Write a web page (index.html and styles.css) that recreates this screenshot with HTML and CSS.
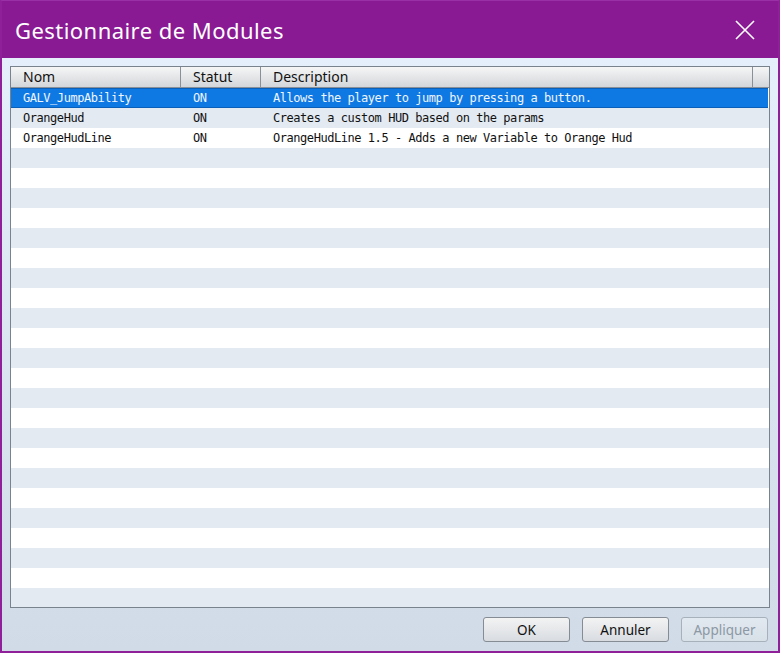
FILE: index.html
```html
<!DOCTYPE html>
<html>
<head>
<meta charset="utf-8">
<link rel="stylesheet" href="styles.css">
</head>
<body>
<div class="window">
  <div class="titlebar">
    <span class="title">Gestionnaire de Modules</span>
    <svg class="close" width="20" height="20" viewBox="0 0 20 20"><path d="M1 1L19 19M19 1L1 19" stroke="#fff" stroke-width="1.6" fill="none"/></svg>
  </div>
  <div class="content">
    <div class="table">
      <div class="header">
        <div class="hc c1">Nom</div>
        <div class="hc c2">Statut</div>
        <div class="hc c3">Description</div>
        <div class="hc c4"></div>
      </div>
      <div class="rows">
        <div class="row sel"><span class="c1">GALV_JumpAbility</span><span class="c2">ON</span><span class="c3">Allows the player to jump by pressing a button.</span></div>
        <div class="row"><span class="c1">OrangeHud</span><span class="c2">ON</span><span class="c3">Creates a custom HUD based on the params</span></div>
        <div class="row"><span class="c1">OrangeHudLine</span><span class="c2">ON</span><span class="c3">OrangeHudLine 1.5 - Adds a new Variable to Orange Hud</span></div>
        <div class="row"></div><div class="row"></div><div class="row"></div><div class="row"></div>
        <div class="row"></div><div class="row"></div><div class="row"></div><div class="row"></div>
        <div class="row"></div><div class="row"></div><div class="row"></div><div class="row"></div>
        <div class="row"></div><div class="row"></div><div class="row"></div><div class="row"></div>
        <div class="row"></div><div class="row"></div><div class="row"></div><div class="row"></div>
        <div class="row"></div><div class="row"></div><div class="row"></div>
      </div>
    </div>
    <div class="buttons">
      <button class="btn">OK</button>
      <button class="btn">Annuler</button>
      <button class="btn disabled">Appliquer</button>
    </div>
  </div>
</div>
</body>
</html>
```

FILE: styles.css
```css
* { box-sizing: border-box; }
html, body { margin: 0; padding: 0; }
body { width: 780px; height: 653px; overflow: hidden; }
.window {
  width: 780px; height: 653px;
  border: 2px solid #8f209a;
  border-top: 1px solid #9a30a5;
  display: flex; flex-direction: column;
  background: #8a1a93;
}
.titlebar {
  height: 57px; flex: none;
  background: #8a1a93;
  display: flex; align-items: center; justify-content: space-between;
  padding: 0 23px 0 13px;
}
.title {
  font-family: "Noto Sans", sans-serif; font-size: 22px; color: #fff;
  letter-spacing: 0.45px;
  padding-top: 1px;
}
.close { display: block; margin-top: 1px; }
.content {
  flex: 1;
  background: linear-gradient(#e4effb, #d0dbe7);
  padding: 8px 8px 0 8px;
  display: flex; flex-direction: column;
}
.table {
  height: 542px; flex: none;
  border: 1px solid #79838e;
  background: #fff;
  display: flex; flex-direction: column;
  overflow: hidden;
}
.header {
  height: 21px; flex: none;
  display: flex;
  background: linear-gradient(#f6f6f6, #d3d6da);
  border-bottom: 1px solid #8a9098;
}
.hc {
  font-family: "Noto Sans", sans-serif; font-size: 14px; color: #111;
  line-height: 20px;
  padding-left: 12px;
  border-right: 1px solid #8a9098;
}
.c1 { width: 170px; }
.c2 { width: 80px; }
.c3 { width: 492px; }
.c4 { flex: 1; border-right: none; }
.rows { flex: 1; overflow: hidden; }
.row {
  height: 20px; display: flex;
  font-family: "DejaVu Sans Mono", monospace; font-size: 12px; letter-spacing: -0.45px;
  color: #111; line-height: 20px;
  background: #fff;
}
.row:nth-child(even) { background: #e3eaf1; }
.row span { padding-left: 12px; white-space: nowrap; }
.row .c3 { width: auto; }
.row.sel {
  background: #0f79e3;
  color: #f0f6ff;
  border-top: 1px solid #0a5fb8;
  border-bottom: 1px solid #0a5fb8;
  line-height: 18px;
  margin-right: 1px;
}
.buttons {
  display: flex; justify-content: flex-end; gap: 12px;
  padding: 9px 2px 0 0;
}
.btn {
  width: 87px; height: 25px;
  font-family: "Noto Sans", sans-serif; font-size: 13.5px; color: #111;
  background: linear-gradient(#f3f3f3, #d8dce1);
  border: 1px solid #858c94;
  border-radius: 3px;
  padding: 0;
}
.btn.disabled {
  color: #8c98a4;
  border-color: #a7b1bb;
  background: linear-gradient(#e2e9f0, #d8e0e8);
}
```
